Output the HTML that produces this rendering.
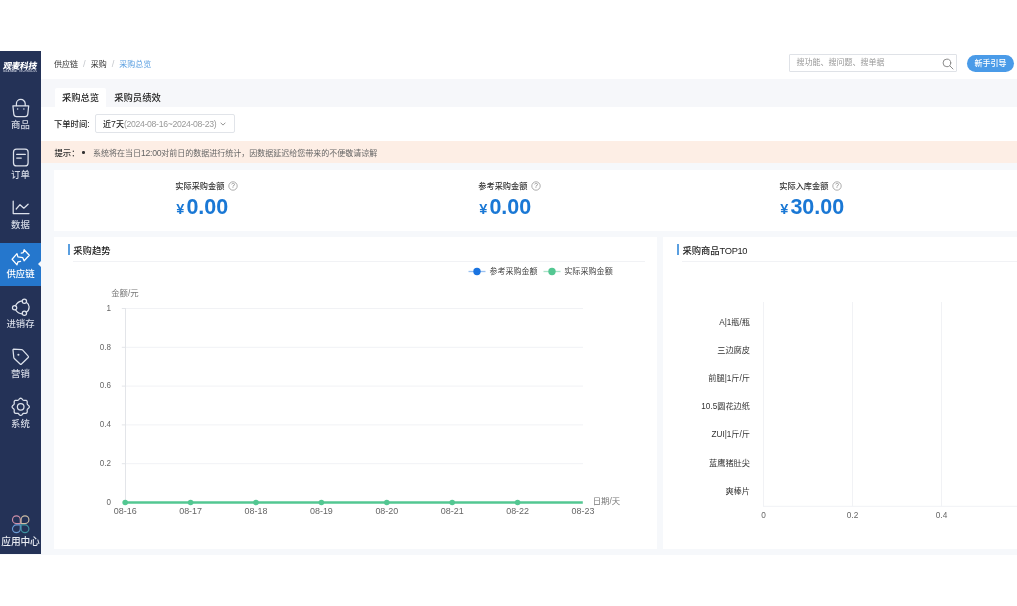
<!DOCTYPE html>
<html lang="zh-CN">
<head>
<meta charset="utf-8">
<title>采购总览</title>
<style>
*{box-sizing:border-box;margin:0;padding:0}
html,body{width:1017px;height:606px;overflow:hidden;background:#fff}
body{font-family:"Liberation Sans","Noto Sans CJK SC",sans-serif;color:#333;position:relative;font-size:8px;line-height:1}
.abs{position:absolute}
#app{will-change:transform;position:absolute;left:0;top:51px;width:1017px;height:504px;background:#f6f8fb;overflow:hidden}
#side{position:absolute;left:0;top:0;width:41px;height:503.400px;background:#243257}
.nav{font-weight:500;position:absolute;left:0;width:41px;height:10px;line-height:10px;text-align:center;color:#d3d8e4;font-size:9.4px;white-space:nowrap}
#hdr{position:absolute;left:41px;top:0;width:976px;height:28px;background:#fff}
.bc{position:absolute;left:13px;top:8.800px;height:10px;line-height:10px;font-size:8px;color:#333;white-space:nowrap}
.bc i{font-style:normal;color:#c6c9ce;margin:0 5px;font-size:9.500px;line-height:0}
.bc b{font-weight:normal;color:#5a9fe0}
#search{position:absolute;left:747.500px;top:3.400px;width:168.500px;height:17.300px;border:1px solid #dfe2e7;border-radius:1px;background:#fff}
#search span{position:absolute;left:7px;top:4px;font-size:8px;color:#999}
#guide{position:absolute;left:926px;top:3.800px;width:47px;height:17px;border-radius:8.500px;background:#4a9be8;color:#fff;font-size:8px;font-weight:500;text-align:center;line-height:17px}
#tabs{position:absolute;left:41px;top:28px;width:976px;height:28px;background:#f6f7fa}
.tab{font-weight:500;position:absolute;top:9px;height:19px;font-size:9.300px;line-height:20px;text-align:center;color:#222}
.tab.on{background:#fff;border-radius:2px 2px 0 0}
#filter{position:absolute;left:41px;top:56px;width:976px;height:34px;background:#fff}
#filter .lb{font-weight:500;position:absolute;left:13px;top:12.700px;font-size:8.300px;color:#222}
#sel{position:absolute;left:53.700px;top:7.400px;width:140px;height:19px;border:1px solid #e1e4e9;border-radius:2px;background:#fff;font-size:8px;white-space:nowrap}
#sel span{position:absolute;left:7.300px;top:4.700px;color:#222;font-weight:500}
#sel em{font-style:normal;color:#999;font-weight:400;font-size:8.700px;letter-spacing:-0.320px}
#notice{position:absolute;left:41px;top:90px;width:976px;height:22.400px;background:#fdeee5;font-size:8px;color:#666;white-space:nowrap}
#notice span{position:absolute;top:7.500px}
.card{position:absolute;background:#fff}
.kl{font-weight:500;position:absolute;top:11.600px;font-size:8.2px;color:#333;white-space:nowrap}
.kv{position:absolute;top:27.300px;margin-left:1px;font-size:21.500px;font-weight:bold;color:#1a78d5;white-space:nowrap;font-family:"Liberation Sans","Noto Sans CJK SC",sans-serif}
.kv small{font-size:14.500px;font-weight:bold;margin-right:2px}
.ct{font-weight:500;position:absolute;left:13px;top:8.300px;height:11px;padding-left:6px;font-size:9.3px;line-height:11px;color:#222;white-space:nowrap}
.cl{position:absolute;left:18.500px;right:12px;top:23.700px;height:1px;background:#f1f2f5}
.ct:before{content:"";position:absolute;left:0.700px;top:-1.300px;width:2px;height:10.600px;background:#5a9fe0}
svg text{font-family:"Liberation Sans","Noto Sans CJK SC",sans-serif}
</style>
</head>
<body>
<div id="app">
  <div id="side">
    <div class="abs" style="left:0;top:10.700px;width:40px;color:#fff;font-size:8.700px;line-height:9px;font-weight:900;transform:skewX(-9deg);text-align:center;white-space:nowrap;letter-spacing:-0.300px">观麦科技</div>
    <div class="abs" style="left:3px;top:19.200px;width:34px;color:#c5cbda;font-size:2.6px;line-height:3px;font-weight:bold;text-align:justify;white-space:nowrap;letter-spacing:0.3px;overflow:hidden">GUANMAI TECHNOLOGY</div>
    <div class="abs" style="left:0;top:191.700px;width:41px;height:43.500px;background:#2577cd"></div>
    <div class="abs" style="left:37.500px;top:209.500px;width:0;height:0;border-top:3.700px solid transparent;border-bottom:3.700px solid transparent;border-right:3.500px solid #f6f8fb"></div>
    <svg class="abs" style="left:0;top:0" width="41" height="504" viewBox="0 0 41 504" fill="none" stroke="#dde2ec" stroke-width="1.250" stroke-linecap="round" stroke-linejoin="round">
      <!-- bag -->
      <path d="M12.900 54.800h15.800l-.9 8.300a2.800 2.800 0 0 1-2.800 2.500h-8.400a2.800 2.800 0 0 1-2.800-2.500z"/>
      <path d="M16.400 54.600v-1.800a4.400 4.400 0 0 1 8.800 0v1.800"/>
      <circle cx="17.600" cy="57.900" r=".75" fill="#dde2ec" stroke="none"/><circle cx="23.900" cy="57.900" r=".75" fill="#dde2ec" stroke="none"/>
      <!-- order -->
      <rect x="13.500" y="98.100" width="14.600" height="16.800" rx="3"/>
      <path d="M16.700 103.400h8.600M16.700 107.100h4.600"/>
      <!-- data -->
      <path d="M13.200 150v12.500h15.800"/>
      <path d="M16.200 158l3.800-4.300 3.800 3.500 4.300-4"/>
      <!-- supply (active) -->
      <path stroke="#fff" d="M21.300 202.200L23.300 201.600L24.100 198.700L29.300 204.200L24.100 209.800L22.800 206.700L17.900 205.800L17 202.700L12.100 208.250L17 213.800L17.900 210.900L20.600 210.300"/>
      <!-- inventory -->
      <path d="M26.300 251.300A5.800 5.800 0 0 1 26.300 261.200M15.500 254.700A8.500 8.500 0 0 1 22.300 249.800M15.500 258.700A8.500 8.500 0 0 0 22.300 262.800"/>
      <circle cx="24.400" cy="250.200" r="2.150"/><circle cx="14.600" cy="256.700" r="2.150"/><circle cx="24.400" cy="262.300" r="2.150"/>
      <!-- tag -->
      <path d="M13.400 298.200l8.200.4a1.600 1.600 0 0 1 1.100.5l5.500 6a1 1 0 0 1 0 1.400l-6.700 6.500a1 1 0 0 1-1.400 0l-5.800-5.500a1.600 1.600 0 0 1-.5-1l-.8-7.500a.8.800 0 0 1 .4-.8z"/>
      <circle cx="18.400" cy="303.800" r="1.050" fill="#dde2ec" stroke="none"/>
      <!-- gear -->
      <path d="M20.70 347.20L21.26 347.32L21.77 347.65L22.23 348.10L22.63 348.58L23.01 348.98L23.42 349.24L23.88 349.34L24.44 349.33L25.06 349.27L25.71 349.27L26.30 349.41L26.78 349.72L27.09 350.20L27.23 350.79L27.23 351.44L27.17 352.06L27.16 352.62L27.26 353.08L27.52 353.49L27.92 353.87L28.40 354.27L28.85 354.73L29.18 355.24L29.30 355.80L29.18 356.36L28.85 356.87L28.40 357.33L27.92 357.73L27.52 358.11L27.26 358.52L27.16 358.98L27.17 359.54L27.23 360.16L27.23 360.81L27.09 361.40L26.78 361.88L26.30 362.19L25.71 362.33L25.06 362.33L24.44 362.27L23.88 362.26L23.42 362.36L23.01 362.62L22.63 363.02L22.23 363.50L21.77 363.95L21.26 364.28L20.70 364.40L20.14 364.28L19.63 363.95L19.17 363.50L18.77 363.02L18.39 362.62L17.98 362.36L17.52 362.26L16.96 362.27L16.34 362.33L15.69 362.33L15.10 362.19L14.62 361.88L14.31 361.40L14.17 360.81L14.17 360.16L14.23 359.54L14.24 358.98L14.14 358.52L13.88 358.11L13.48 357.73L13.00 357.33L12.55 356.87L12.22 356.36L12.10 355.80L12.22 355.24L12.55 354.73L13.00 354.27L13.48 353.87L13.88 353.49L14.14 353.08L14.24 352.62L14.23 352.06L14.17 351.44L14.17 350.79L14.31 350.20L14.62 349.72L15.10 349.41L15.69 349.27L16.34 349.27L16.96 349.33L17.52 349.34L17.98 349.24L18.39 348.98L18.77 348.58L19.17 348.10L19.63 347.65L20.14 347.32z"/>
      <circle cx="20.700" cy="355.800" r="3.300"/>
      <!-- app center -->
      <g stroke-width="1.150">
        <path d="M20.300 472.600h-3.900a3.900 3.900 0 1 1 3.900-3.900z" stroke="#cf8fa8"/>
        <path d="M21.100 472.600h3.900a3.900 3.900 0 1 0-3.900-3.900z" stroke="#cdbda4"/>
        <path d="M20.300 473.900h-3.900a3.900 3.900 0 1 0 3.900 3.900z" stroke="#6a9bd4"/>
        <path d="M21.100 473.900h3.900a3.900 3.900 0 1 1-3.900 3.900z" stroke="#3d93a0"/>
      </g>
    </svg>
    <div class="nav" style="top:68.700px">商品</div>
    <div class="nav" style="top:119.400px">订单</div>
    <div class="nav" style="top:168.700px">数据</div>
    <div class="nav" style="top:218.300px;color:#fff">供应链</div>
    <div class="nav" style="top:268.400px">进销存</div>
    <div class="nav" style="top:318.200px">营销</div>
    <div class="nav" style="top:368.400px">系统</div>
    <div class="nav" style="top:486.200px;color:#e8ebf2;font-size:9.700px;letter-spacing:-0.100px">应用中心</div>
  </div>

  <div id="hdr">
    <div class="bc">供应链<i>/</i>采购<i>/</i><b>采购总览</b></div>
    <div id="search"><span>搜功能、搜问题、搜单据</span>
      <svg class="abs" style="left:152.500px;top:2.200px" width="12" height="12" viewBox="0 0 11 11" fill="none" stroke="#888" stroke-width="0.900" stroke-linecap="round"><circle cx="4.500" cy="4.500" r="3.500"/><path d="M7.100 7.100l3 3"/></svg>
    </div>
    <div id="guide">新手引导</div>
  </div>

  <div id="tabs">
    <div class="tab on" style="left:14px;width:51px">采购总览</div>
    <div class="tab" style="left:65px;width:63px">采购员绩效</div>
  </div>

  <div id="filter">
    <div class="lb">下单时间:</div>
    <div id="sel"><span>近<i style="font-style:normal;font-size:8.800px">7</i>天<em>(2024-08-16~2024-08-23)</em></span>
      <svg class="abs" style="left:124.300px;top:7px" width="6" height="4" viewBox="0 0 6 4" fill="none" stroke="#888" stroke-width="0.900"><path d="M.6.700l2.400 2.400L5.400.700"/></svg>
    </div>
  </div>

  <div id="notice"><span style="left:13.500px;color:#333;font-weight:500;font-size:8.400px">提示：</span><span style="left:41px;top:10.200px;width:2.600px;height:2.600px;border-radius:50%;background:#333"></span><span style="left:52px">系统将在当日<i style="font-style:normal;font-size:8.700px;letter-spacing:-0.300px">12:00</i>对前日的数据进行统计，因数据延迟给您带来的不便敬请谅解</span></div>

  <div class="card" id="kpi" style="left:54.300px;top:118.700px;width:963px;height:61.600px">
    <div class="kl" style="left:121px">实际采购金额 <svg width="10" height="10" viewBox="0 0 10 10" style="vertical-align:-2.500px;margin-left:1px"><circle cx="5" cy="5" r="4.200" fill="none" stroke="#8a8a8a" stroke-width=".7"/><text x="5" y="7.400" font-size="6.500" text-anchor="middle" fill="#777">?</text></svg></div>
    <div class="kv" style="left:121px"><small>¥</small>0.00</div>
    <div class="kl" style="left:424px">参考采购金额 <svg width="10" height="10" viewBox="0 0 10 10" style="vertical-align:-2.500px;margin-left:1px"><circle cx="5" cy="5" r="4.200" fill="none" stroke="#8a8a8a" stroke-width=".7"/><text x="5" y="7.400" font-size="6.500" text-anchor="middle" fill="#777">?</text></svg></div>
    <div class="kv" style="left:424px"><small>¥</small>0.00</div>
    <div class="kl" style="left:725px">实际入库金额 <svg width="10" height="10" viewBox="0 0 10 10" style="vertical-align:-2.500px;margin-left:1px"><circle cx="5" cy="5" r="4.200" fill="none" stroke="#8a8a8a" stroke-width=".7"/><text x="5" y="7.400" font-size="6.500" text-anchor="middle" fill="#777">?</text></svg></div>
    <div class="kv" style="left:725px"><small>¥</small>30.00</div>
  </div>

  <div class="card" id="trend" style="left:54.300px;top:186.300px;width:602.500px;height:311.700px">
    <div class="ct">采购趋势</div>
    <div class="cl"></div>
    <svg class="abs" style="left:-0.300px;top:-0.300px" width="603" height="312" viewBox="0 0 603 312" font-size="8">
      <line x1="414.500" y1="34.500" x2="431.500" y2="34.500" stroke="#1a73e0" stroke-opacity=".45" stroke-width="1.300"/><circle cx="423" cy="34.500" r="3.700" fill="#1a73e0"/>
      <text x="435.500" y="37.400" fill="#444" font-size="8">参考采购金额</text>
      <line x1="489.500" y1="34.500" x2="506.500" y2="34.500" stroke="#53c792" stroke-opacity=".5" stroke-width="1.300"/><circle cx="498" cy="34.500" r="3.700" fill="#53c792"/>
      <text x="510.200" y="37.400" fill="#444" font-size="8.100">实际采购金额</text>
      <text x="57.200" y="58.600" fill="#777" font-size="8.400">金额/元</text>
      <g stroke="#f1f2f5" stroke-width="1">
      <line x1="72" y1="71.5" x2="529" y2="71.5"/>
      <line x1="72" y1="110.3" x2="529" y2="110.3"/>
      <line x1="72" y1="149.1" x2="529" y2="149.1"/>
      <line x1="72" y1="187.9" x2="529" y2="187.9"/>
      <line x1="72" y1="226.7" x2="529" y2="226.7"/>
      </g>
      <line x1="71.500" y1="71" x2="71.500" y2="265.5" stroke="#e3e5e9" stroke-width="1"/>
      <g stroke="#e3e5e9" stroke-width="1">
      <line x1="67.800" y1="71.5" x2="71.500" y2="71.5"/>
      <line x1="67.800" y1="110.3" x2="71.500" y2="110.3"/>
      <line x1="67.800" y1="149.1" x2="71.500" y2="149.1"/>
      <line x1="67.800" y1="187.9" x2="71.500" y2="187.9"/>
      <line x1="67.800" y1="226.7" x2="71.500" y2="226.7"/>
      </g>
      <text transform="translate(57 73.8) scale(0.93 1)" font-size="8.7" text-anchor="end" fill="#666">1</text>
      <text transform="translate(57 112.6) scale(0.93 1)" font-size="8.7" text-anchor="end" fill="#666">0.8</text>
      <text transform="translate(57 151.4) scale(0.93 1)" font-size="8.7" text-anchor="end" fill="#666">0.6</text>
      <text transform="translate(57 190.2) scale(0.93 1)" font-size="8.7" text-anchor="end" fill="#666">0.4</text>
      <text transform="translate(57 229) scale(0.93 1)" font-size="8.7" text-anchor="end" fill="#666">0.2</text>
      <text transform="translate(57 267.8) scale(0.93 1)" font-size="8.7" text-anchor="end" fill="#666">0</text>
      <line x1="71.200" y1="265.500" x2="528.800" y2="265.500" stroke="#53c792" stroke-width="2.600"/>
      <g fill="#53c792">
      <circle cx="71.2" cy="265.500" r="2.8"/>
      <circle cx="136.6" cy="265.500" r="2.8"/>
      <circle cx="202" cy="265.500" r="2.8"/>
      <circle cx="267.4" cy="265.500" r="2.8"/>
      <circle cx="332.8" cy="265.500" r="2.8"/>
      <circle cx="398.2" cy="265.500" r="2.8"/>
      <circle cx="463.6" cy="265.500" r="2.8"/>
      </g>
      <text transform="translate(71.2 276.7) scale(1.0 1)" font-size="8.95" text-anchor="middle" fill="#666">08-16</text>
      <text transform="translate(136.6 276.7) scale(1.0 1)" font-size="8.95" text-anchor="middle" fill="#666">08-17</text>
      <text transform="translate(202 276.7) scale(1.0 1)" font-size="8.95" text-anchor="middle" fill="#666">08-18</text>
      <text transform="translate(267.4 276.7) scale(1.0 1)" font-size="8.95" text-anchor="middle" fill="#666">08-19</text>
      <text transform="translate(332.8 276.7) scale(1.0 1)" font-size="8.95" text-anchor="middle" fill="#666">08-20</text>
      <text transform="translate(398.2 276.7) scale(1.0 1)" font-size="8.95" text-anchor="middle" fill="#666">08-21</text>
      <text transform="translate(463.6 276.7) scale(1.0 1)" font-size="8.95" text-anchor="middle" fill="#666">08-22</text>
      <text transform="translate(529 276.7) scale(1.0 1)" font-size="8.95" text-anchor="middle" fill="#666">08-23</text>
      <text x="538.700" y="267.100" fill="#777" font-size="8.400">日期/天</text>
      </svg>
  </div>

  <div class="card" id="top10" style="left:663.400px;top:186.300px;width:354px;height:311.700px">
    <div class="ct">采购商品<span style="letter-spacing:-0.350px">TOP10</span></div>
    <div class="cl" style="right:0"></div>
    <svg class="abs" style="left:-0.400px;top:-0.300px" width="354" height="312" viewBox="0 0 354 312" font-size="8.200">
      <g stroke="#f1f2f5" stroke-width="1">
      <line x1="100.5" y1="65" x2="100.5" y2="269.300"/>
      <line x1="189.5" y1="65" x2="189.5" y2="269.300"/>
      <line x1="278.5" y1="65" x2="278.5" y2="269.300"/>
      <line x1="100" y1="269.300" x2="355" y2="269.300"/>
      </g>
      <g fill="#333" text-anchor="end">
      <text x="87" y="87.6">A|1瓶/瓶</text>
      <text x="87" y="115.8">三边腐皮</text>
      <text x="87" y="144">前腿|1斤/斤</text>
      <text x="87" y="172.2">10.5圆花边纸</text>
      <text x="87" y="200.4">ZUI|1斤/斤</text>
      <text x="87" y="228.7">蓝鹰猪肚尖</text>
      <text x="87" y="257.1">爽棒片</text>
      </g>
      <text transform="translate(100.5 281.2) scale(0.95 1)" font-size="8.7" text-anchor="middle" fill="#666">0</text>
      <text transform="translate(189.5 281.2) scale(0.95 1)" font-size="8.7" text-anchor="middle" fill="#666">0.2</text>
      <text transform="translate(278.5 281.2) scale(0.95 1)" font-size="8.7" text-anchor="middle" fill="#666">0.4</text>
      </svg>
  </div>
</div>
</body>
</html>
